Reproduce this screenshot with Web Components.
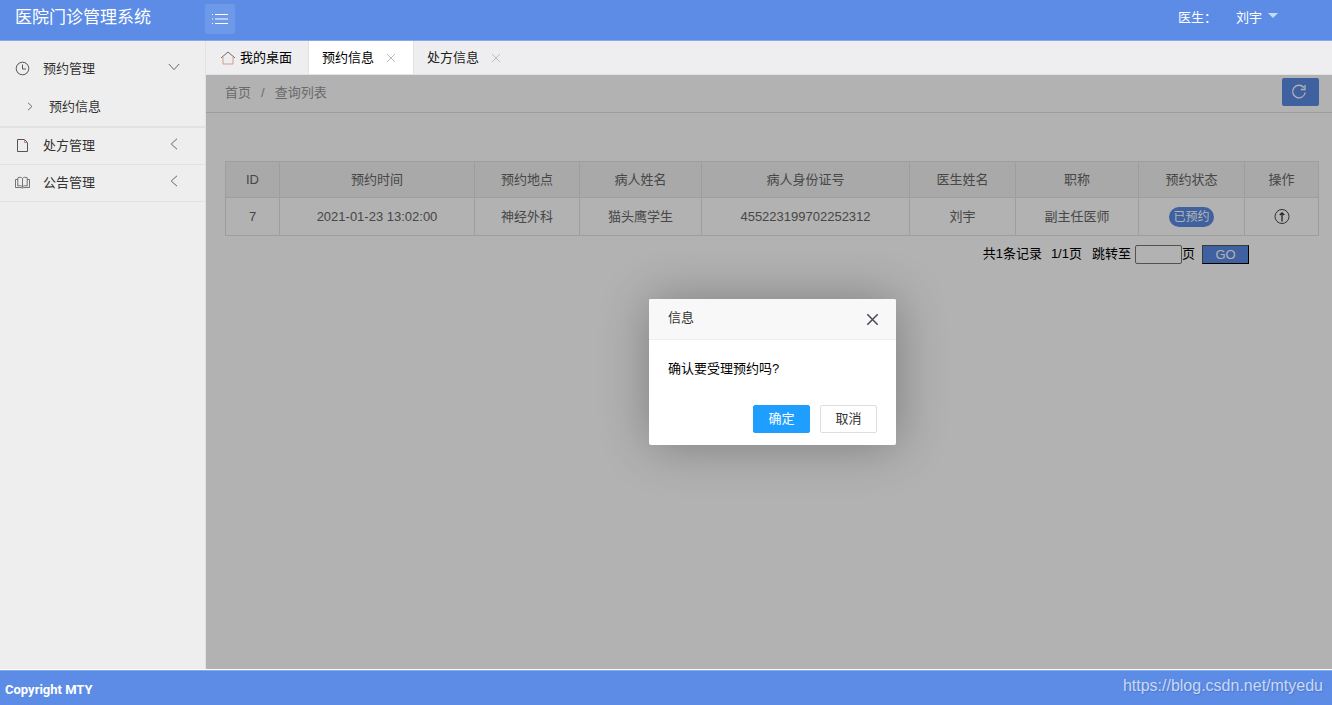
<!DOCTYPE html>
<html lang="zh-CN">
<head>
<meta charset="utf-8">
<title>医院门诊管理系统</title>
<style>
  body {
    margin: 0;
    font: 13px/20px "Liberation Sans", "Noto Sans CJK SC", sans-serif;
    color: #000;
    --blue: #5c8ce6;
    --line: #e2e2e2;
  }
</style>
</head>
<body>
<clinic-app>
  <app-header slot="header" heading="医院门诊管理系统" role-label="医生：" user="刘宇"></app-header>
  <side-nav slot="nav">
    <nav-group icon="clock" label="预约管理" open><a slot="sub" href="#booking">预约信息</a></nav-group>
    <nav-group icon="file" label="处方管理"></nav-group>
    <nav-group icon="book" label="公告管理"></nav-group>
  </side-nav>
  <tab-bar slot="tabs">
    <tab-item home>我的桌面</tab-item>
    <tab-item active closable>预约信息</tab-item>
    <tab-item closable>处方信息</tab-item>
  </tab-bar>
  <crumb-bar slot="page"></crumb-bar>
  <booking-table slot="page"></booking-table>
  <page-turner slot="page"></page-turner>
  <confirm-dialog slot="dialog" heading="信息">确认要受理预约吗?</confirm-dialog>
  <app-footer slot="footer">Copyright MTY<span slot="end">https://blog.csdn.net/mtyedu</span></app-footer>
</clinic-app>

<script>
const svg = (w, h, body, extra = '') =>
  `<svg width="${w}" height="${h}" viewBox="0 0 ${w} ${h}" fill="none" stroke="currentColor" aria-hidden="true" ${extra}>${body}</svg>`;

const icons = {
  clock: svg(16, 16, '<circle cx="7.5" cy="7.5" r="6.3"/><path d="M7.5 3.5V8H11"/>'),
  file: svg(16, 16, '<path d="M2.5 1.5H9.5L12.5 4.5V13.5H2.5Z"/><path d="M9.5 1.5V4.5H12.5" stroke="#b98a7c"/>'),
  book: svg(16, 16, '<path d="M7.5 3.5C6.5 2 4 2 2.8 2.8V11C4.5 10.4 6.5 10.6 7.5 11.8C8.5 10.6 10.5 10.4 12.2 11V2.8C11 2 8.5 2 7.5 3.5V11.8"/><path d="M2.8 4.5H.5V12.5H6L7.5 13L9 12.5H14.5V4.5H12.2"/>', 'stroke-width=".8"'),
  down: svg(12, 8, '<path d="M.8 1L6 6.6L11.2 1"/>'),
  left: svg(8, 12, '<path d="M7 .8L1.2 6L7 11.2"/>'),
  right: svg(6, 9, '<path d="M1 .8L5 4.5L1 8.2" stroke="#806a68"/>'),
  home: svg(16, 14, '<path d="M1 7L8 1L15 7" stroke="#75655f"/><path d="M3 6V13H13V6" stroke="#d59b8b"/>'),
  close: svg(10, 10, '<path d="M1 1L9 9M9 1L1 9"/>'),
  menu: svg(18, 12, '<path d="M4 1.5H17M4 6H17M4 10.5H17M1 1.5H2M1 6H2M1 10.5H2"/>', 'stroke-width="1.2"'),
  reload: svg(16, 16, '<path d="M14.2 8.5A6.3 6.3 0 1 1 12.8 3.5M14 1V5.5H9.8" stroke-width="1.3"/>'),
  up: svg(16, 16, '<circle cx="8" cy="7.5" r="7" stroke-width=".9"/><path d="M8 12.5V4M5.8 6L8 3.8L10.2 6" stroke-width="1.3"/>')
};

const base = `*{box-sizing:border-box}svg{display:block;flex:none}
a{color:inherit;text-decoration:none}
button,input{font:inherit;color:inherit;margin:0;padding:0;border:0;background:none}button{cursor:pointer}`;

function define(name, css, html) {
  customElements.define(name, class extends HTMLElement {
    constructor() {
      super();
      this.attachShadow({ mode: 'open' });
    }
    connectedCallback() {
      const markup = typeof html === 'function' ? html(this) : html;
      this.shadowRoot.innerHTML = `<style>${base}${css}</style>${markup}`;
    }
  });
}

define('clinic-app', `
  :host{display:flex;flex-direction:column;min-height:100vh}
  .middle{display:flex;flex:1}
  main{display:flex;flex-direction:column;flex:1;min-width:0}
  .frame{position:relative;flex:1;background:#fff}
`, `<slot name="header"></slot>
  <div class="middle"><slot name="nav"></slot>
    <main><slot name="tabs"></slot><div class="frame"><slot name="page"></slot><slot name="dialog"></slot></div></main>
  </div><slot name="footer"></slot>`);

define('app-header', `
  :host{display:block;color:#fff}
  header{display:flex;align-items:flex-start;height:41px;background:var(--blue);border-bottom:1px solid #85a9ed}
  h1{margin:0;width:205px;padding:5px 0 0 15px;font-size:17px;line-height:26px;font-weight:400}
  .menu{display:grid;place-items:center;width:30px;height:30px;margin-top:4px;border-radius:2px;background:#6e99e9}
  .user{display:flex;margin:8px 54px 0 auto;gap:19px}
  .user button{display:flex;gap:6px}
  i{border:5px solid transparent;border-top-color:#c8d8f7;border-bottom:0;margin-top:5px}
`, el => `<header><h1>${el.getAttribute('heading')}</h1>
  <button class="menu" aria-label="菜单">${icons.menu}</button>
  <div class="user"><span>${el.getAttribute('role-label')}</span><button>${el.getAttribute('user')}<i></i></button></div></header>`);

define('side-nav', `
  :host{display:block;flex:none;width:206px;padding-top:10px;box-sizing:border-box;background:#eee;border-right:1px solid #e2e2e4}
`, `<nav><slot></slot></nav>`);

define('nav-group', `
  :host{display:block;color:#333;border-bottom:1px solid var(--line)}
  :host([open]){border-bottom-width:2px}
  .head{display:flex;align-items:center;width:100%;height:36px;padding:0 25px 0 15px;text-align:left}
  .head > svg{color:#555}
  .label{margin-left:12px;flex:1}
  .arrow{display:grid;place-items:center;width:12px;height:12px;margin-bottom:5px;color:#666}
  .sub{display:flex;align-items:center;height:39px;padding-left:27px;gap:16px}
  ::slotted(a){color:#333;text-decoration:none}
`, el => {
  const open = el.hasAttribute('open');
  return `<button class="head" aria-expanded="${open}">${icons[el.getAttribute('icon')]}<span class="label">${el.getAttribute('label')}</span>
    <span class="arrow">${open ? icons.down : icons.left}</span></button>
    ${open ? `<div class="sub">${icons.right}<slot name="sub"></slot></div>` : ''}`;
});

define('tab-bar', `
  :host{display:flex;height:34px;box-sizing:border-box;background:#eeeef0;border-bottom:1px solid var(--line)}
`, `<slot></slot>`);

define('tab-item', `
  :host{display:flex;align-items:center;padding:0 17px 0 13px;color:#222}
  :host([home]){padding:0 16px 0 14px;border-right:1px solid var(--line);color:#000}
  :host([active]){background:#fff;border-right:1px solid var(--line);color:#000}
  .label{display:flex;align-items:center;gap:4px}
  .close{margin-left:12px;color:#bbb}
`, el => `<button class="label">${el.hasAttribute('home') ? icons.home : ''}<slot></slot></button>
  ${el.hasAttribute('closable') ? `<button class="close" aria-label="关闭">${icons.close}</button>` : ''}`);

define('crumb-bar', `
  :host{display:flex;justify-content:space-between;height:38px;box-sizing:border-box;padding:3px 13px 0 19px;color:#999;border-bottom:1px solid #e3e3e3}
  nav{display:flex;gap:10px;line-height:30px}
  button{display:grid;place-items:center;width:37px;height:28px;border-radius:2px;background:var(--blue);color:#fff}
  svg{margin-right:3px}
`, `<nav><a href="#home">首页</a><span>/</span><a href="#list">查询列表</a></nav><button aria-label="刷新">${icons.reload}</button>`);

const columns = [['ID', 54], ['预约时间', 195], ['预约地点', 105], ['病人姓名', 122], ['病人身份证号', 208], ['医生姓名', 106], ['职称', 123], ['预约状态', 106], ['操作', 74]];
const row = ['7', '2021-01-23 13:02:00', '神经外科', '猫头鹰学生', '455223199702252312', '刘宇', '副主任医师',
  '<span class="tag">已预约</span>', `<button aria-label="受理">${icons.up}</button>`];

define('booking-table', `
  :host{display:block;padding:48px 13px 0 19px;color:#666}
  table{width:100%;table-layout:fixed;border-collapse:collapse;text-align:center}
  th,td{padding:0;border:1px solid #e3e3e3;font-weight:400}
  th{height:36px;background:#f2f2f2}
  td{height:38px}
  .tag{display:inline-block;vertical-align:top;padding:0 4px;border-radius:10px;background:var(--blue);color:#fff;font-size:12px}
  button{display:inline-block;vertical-align:middle;color:#333}
`, `<table><colgroup>${columns.map(c => `<col style="width:${c[1]}px">`).join('')}</colgroup>
  <thead><tr>${columns.map(c => `<th scope="col">${c[0]}</th>`).join('')}</tr></thead>
  <tbody><tr>${row.map(v => `<td>${v}</td>`).join('')}</tr></tbody></table>`);

define('page-turner', `
  :host{display:flex;justify-content:flex-end;padding:8px 83px 0 19px}
  .pages{margin:0 10px 0 9px}
  label{display:flex;gap:4px}
  input{width:47px;height:19px;margin-top:1px;border:1px solid #767676;border-radius:2px}
  .unit{margin-right:7px}
  .go{width:47px;height:19px;margin-top:1px;line-height:17px;background:var(--blue);color:#fff;border:1px solid #000;border-top-color:#555;border-left-color:#555}
`, `<span>共1条记录</span><span class="pages">1/1页</span><label>跳转至<input type="text"></label><span class="unit">页</span><button class="go">GO</button>`);

define('confirm-dialog', `
  :host{position:absolute;inset:0;display:flex;align-items:center;justify-content:center;padding-left:7px;background:rgba(0,0,0,.3)}
  section{width:247px;background:#fff;border-radius:2px;box-shadow:1px 1px 50px rgba(0,0,0,.3)}
  header{display:flex;justify-content:space-between;height:41px;padding:0 17px 0 19px;background:#f8f8f8;border-bottom:1px solid #eee;border-radius:2px 2px 0 0;color:#333}
  h2{margin:0;font-size:13px;line-height:38px;font-weight:400}
  header button{color:#4b4b57;padding-top:1px}
  header svg{width:13px;height:13px}
  p{margin:0;padding:19px 19px 26px}
  footer{display:flex;justify-content:flex-end;gap:10px;padding:0 19px 12px}
  footer button{width:57px;height:28px;line-height:26px;border:1px solid #dedede;border-radius:2px;color:#333}
  footer .ok{background:#1e9fff;border-color:#1e9fff;color:#fff}
`, el => `<section role="dialog" aria-modal="true" aria-labelledby="t"><header><h2 id="t">${el.getAttribute('heading')}</h2>
  <button aria-label="关闭">${icons.close.replace('<path', '<path stroke-width="1.2"')}</button></header><p><slot></slot></p>
  <footer><button class="ok">确定</button><button>取消</button></footer></section>`);

define('app-footer', `
  :host{display:block;border-top:1px solid #fff;background:var(--blue);color:#fff}
  footer{display:flex;justify-content:space-between;height:35px;padding:0 9px 0 5px;border-top:1px solid #85a9ed;line-height:37px}
  .copy{font-family:Roboto,"Noto Sans CJK SC",sans-serif;font-weight:700}
  .end{font-size:16px;line-height:30px;color:#c9d8f5;text-shadow:1px 1px 1px #4d78cb}
`, `<footer><span class="copy"><slot></slot></span><span class="end"><slot name="end"></slot></span></footer>`);
</script>
</body>
</html>
